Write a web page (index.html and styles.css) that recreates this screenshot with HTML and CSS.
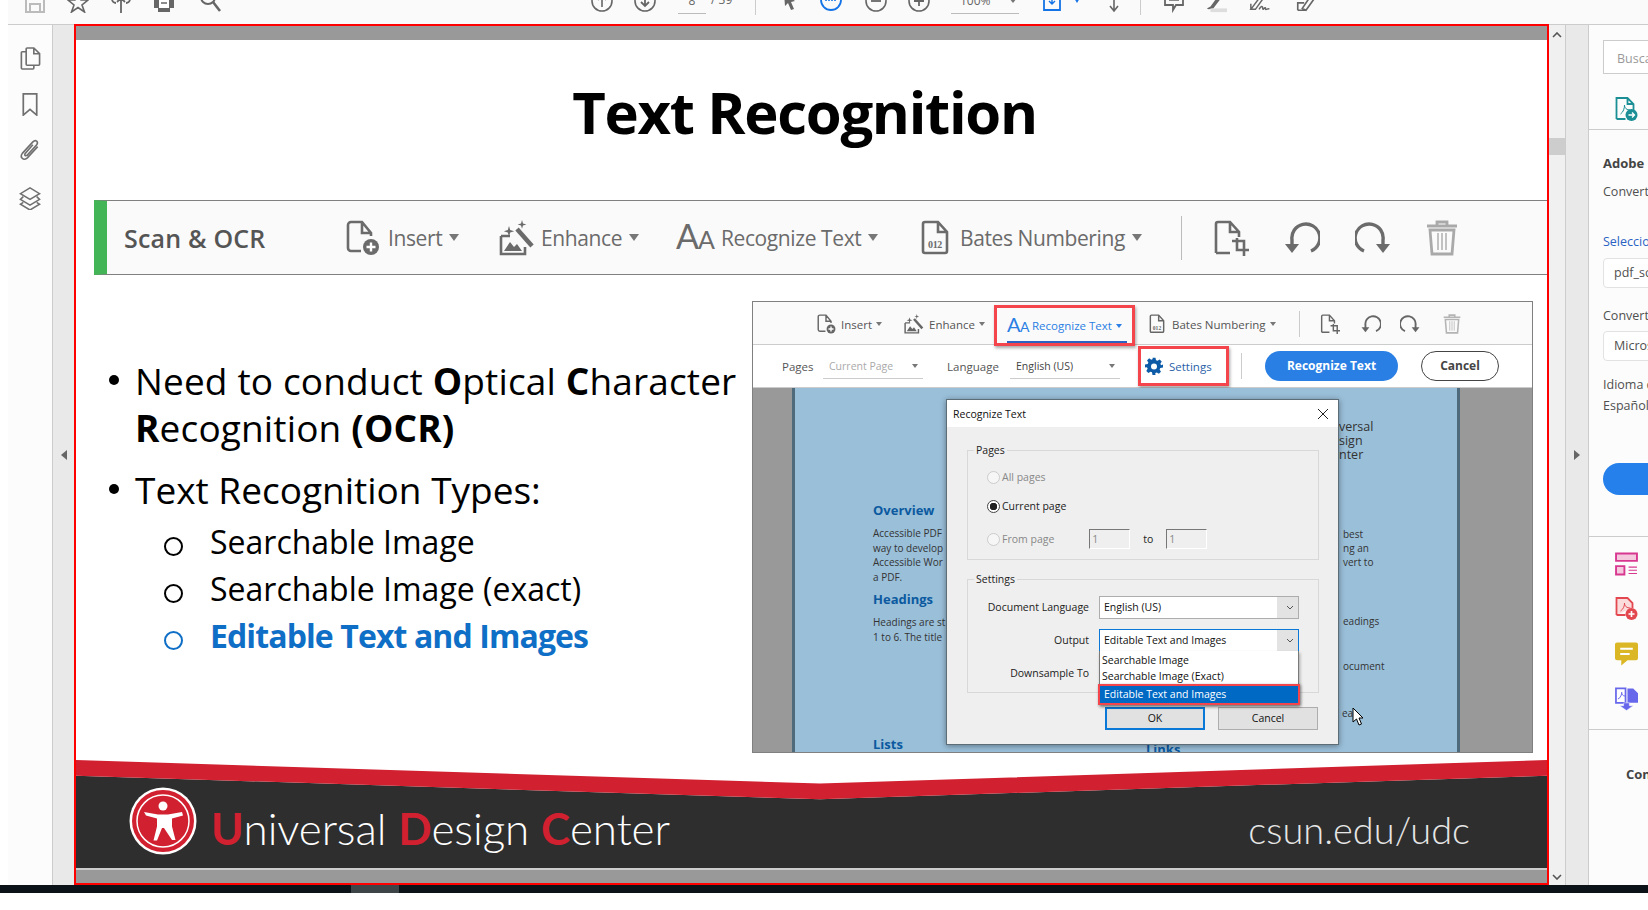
FILE: index.html

```html
<!DOCTYPE html>
<html lang="en">
<head>
    <meta charset="UTF-8">
    <title>Text Recognition - Adobe Acrobat</title>
    <link rel="stylesheet" href="styles.css">
</head>
<body>
    <!-- shared toolbar icons -->
    <svg class="defs" width="0" height="0">
        <symbol id="i-insert" viewBox="0 0 36 36">
            <path d="M4 28V5a3 3 0 0 1 3-3h11l9 11v3M18 2v11h9M4 28a3 3 0 0 0 3 3h10" fill="none" stroke="currentColor" stroke-width="2.6"/>
            <circle cx="27" cy="27" r="8" fill="currentColor"/>
            <path d="M27 22.5v9M22.5 27h9" stroke="#fff" stroke-width="2.4"/>
        </symbol>
        <symbol id="i-enhance" viewBox="0 0 36 36">
            <path d="M2 16v18h24v-7M2 16h9" fill="none" stroke="currentColor" stroke-width="2.6"/>
            <path d="M5 31l6-9 4 5 3-3 5 7z" fill="currentColor"/>
            <path d="M18 9l15 17" stroke="currentColor" stroke-width="4.5"/>
            <path d="M10 6l1.2 4 4 1.2-4 1.2-1.2 4-1.2-4-4-1.2 4-1.2zM23 0l1 3.4 3.4 1-3.4 1-1 3.4-1-3.4-3.4-1 3.4-1z" fill="currentColor"/>
        </symbol>
        <symbol id="i-bates" viewBox="0 0 28 36">
            <path d="M2 31V4a2 2 0 0 1 2-2h13l9 10v19a2 2 0 0 1-2 2H4a2 2 0 0 1-2-2zM17 2v10h9" fill="none" stroke="currentColor" stroke-width="2.6"/>
            <text x="14" y="28" text-anchor="middle" class="bates-num">012</text>
        </symbol>
        <symbol id="i-crop" viewBox="0 0 36 36">
            <path d="M3 33V4a2 2 0 0 1 2-2h12l9 10v5M17 2v10h9M3 33h14" fill="none" stroke="currentColor" stroke-width="2.6"/>
            <path d="M19 21h12v12M24 21v-3M24 21v9h12M31 33v3" fill="none" stroke="currentColor" stroke-width="2.6"/>
        </symbol>
        <symbol id="i-undo" viewBox="0 0 36 36">
            <path d="M27 31A14 14 0 1 0 8 20v5" fill="none" stroke="currentColor" stroke-width="3.4"/>
            <path d="M1 24h14l-7 9z" fill="currentColor"/>
        </symbol>
        <symbol id="i-redo" viewBox="0 0 36 36">
            <path d="M9 31A14 14 0 1 1 28 20v5" fill="none" stroke="currentColor" stroke-width="3.4"/>
            <path d="M35 24H21l7 9z" fill="currentColor"/>
        </symbol>
        <symbol id="i-trash" viewBox="0 0 36 36">
            <path d="M3 6h30M13 6V2h10v4M6 10l2 24h20l2-24z" fill="none" stroke="currentColor" stroke-width="2.8"/>
            <path d="M14 13v17M18 13v17M22 13v17" stroke="currentColor" stroke-width="1.4"/>
        </symbol>
    </svg>

    <div class="app">
        <header class="topbar">
            <svg class="tb" viewBox="0 0 22 22"><path d="M2 1h18v20H2zM6 13h10v8H6z" fill="none" stroke="#bbb" stroke-width="2"/></svg>
            <svg class="tb" viewBox="0 0 22 22"><path d="M11 1l3 8h7l-6 5 2.500 7-6.500-4.500L4.500 21 7 14 1 9h7z" fill="none" stroke="#666" stroke-width="1.600"/></svg>
            <svg class="tb" viewBox="0 0 22 22"><path d="M6 12a4 4 0 0 1 0-8 6 6 0 0 1 10 0 4 4 0 0 1 0 8M11 22V7M7 11l4-4 4 4" fill="none" stroke="#666" stroke-width="1.800"/></svg>
            <svg class="tb" viewBox="0 0 22 22"><path d="M1 2h20v15h-4v4H5v-4H1z" fill="#666"/><path d="M6 9h10v8H6z" fill="#fff"/><path d="M8 12h6" stroke="#666" stroke-width="1.500"/></svg>
            <svg class="tb" viewBox="0 0 22 22"><circle cx="9" cy="6" r="7" fill="none" stroke="#666" stroke-width="2"/><path d="M14 11l7 9" stroke="#666" stroke-width="2.600"/></svg>
            <svg class="tb" viewBox="0 0 22 22"><circle cx="11" cy="10" r="10" fill="none" stroke="#666" stroke-width="1.600"/><path d="M11 16V5M7 9l4-4 4 4" fill="none" stroke="#666" stroke-width="1.600"/></svg>
            <svg class="tb" viewBox="0 0 22 22"><circle cx="11" cy="10" r="10" fill="none" stroke="#666" stroke-width="1.600"/><path d="M11 4v11M7 11l4 4 4-4" fill="none" stroke="#666" stroke-width="1.800"/></svg>
            <span class="tb-field tb-page">8</span>
            <span class="tb-count">/ 39</span>
            <span class="tb-sep"></span>
            <svg class="tb tb-small" viewBox="0 0 14 22"><path d="M2 2l11 8-4 1 3 7-3 1-3-7-3 3z" fill="#666"/></svg>
            <svg class="tb" viewBox="0 0 22 22"><circle cx="11" cy="9" r="10" fill="none" stroke="#1473e6" stroke-width="1.800"/><path d="M6 10V4M9 10V3M12 10V3M15 10V4" stroke="#1473e6" stroke-width="1.600"/></svg>
            <svg class="tb" viewBox="0 0 22 22"><circle cx="11" cy="10" r="10" fill="none" stroke="#666" stroke-width="1.600"/><path d="M6 10h10" stroke="#666" stroke-width="1.800"/></svg>
            <svg class="tb" viewBox="0 0 22 22"><circle cx="11" cy="10" r="10" fill="none" stroke="#666" stroke-width="1.600"/><path d="M6 10h10M11 5v10" stroke="#666" stroke-width="1.800"/></svg>
            <span class="tb-field tb-zoom">100%<i class="caret"></i></span>
            <span class="tb-fit"><svg class="tb tb-fitbox" viewBox="0 0 18 22"><path d="M1 3h16v16H1z" fill="none" stroke="#1473e6" stroke-width="1.800"/><path d="M9 3v10M6 10l3 3 3-3" fill="none" stroke="#1473e6" stroke-width="1.400"/></svg><i class="caret caret-blue"></i></span>
            <svg class="tb tb-small" viewBox="0 0 14 22"><path d="M7 6v14M3 15l4 5 4-5" fill="none" stroke="#666" stroke-width="1.600"/></svg>
            <span class="tb-sep"></span>
            <svg class="tb" viewBox="0 0 22 22"><path d="M2 1h18v13h-7l-3 5v-5H2z" fill="none" stroke="#666" stroke-width="1.800"/><path d="M6 5h10M6 9h10" stroke="#666" stroke-width="1.400"/></svg>
            <svg class="tb" viewBox="0 0 24 22"><path d="M2 18l4-2L16 2l3 3-10 13-5 1z" fill="#666"/><path d="M6 18h18v4H6z" fill="#ddd"/></svg>
            <svg class="tb" viewBox="0 0 24 22"><path d="M2 19L14 3l3 2L7 19H2zM2 13v6M11 19c2-4 4-4 4-1s3-3 3 0 3-1 4 1" fill="none" stroke="#666" stroke-width="1.600"/></svg>
            <svg class="tb" viewBox="0 0 24 22"><path d="M3 20h9M3 20v-8h7M8 18L18 3l4 3-10 14z" fill="none" stroke="#666" stroke-width="1.800"/></svg>
        </header>

        <div class="workspace">
            <nav class="rail">
                <svg class="rail-icon" viewBox="0 0 22 24"><path d="M7 5H3a1 1 0 0 0-1 1v16a1 1 0 0 0 1 1h11a1 1 0 0 0 1-1v-3M7 2a1 1 0 0 1 1-1h7l6 6v11a1 1 0 0 1-1 1H8a1 1 0 0 1-1-1zM15 1v6h6" fill="none" stroke="#707070" stroke-width="1.700"/></svg>
                <svg class="rail-icon" viewBox="0 0 22 24"><path d="M4 1h14v22l-7-6-7 6z" fill="none" stroke="#707070" stroke-width="1.800"/></svg>
                <svg class="rail-icon" viewBox="0 0 22 24"><path d="M19 8L8 20c-4 3-8-1-5-5L14 3c3-3 6 0 4 3L8 17c-2 1-3 0-2-2l8-9" fill="none" stroke="#707070" stroke-width="1.700"/></svg>
                <svg class="rail-icon rail-icon-last" viewBox="0 0 22 24"><path d="M11 1l10 6-10 6L1 7zM4 10l-3 3 10 6 10-6-3-3M4 16l-3 2 10 6 10-6-3-2" fill="none" stroke="#707070" stroke-width="1.600"/></svg>
            </nav>
            <div class="gutter"><i class="arrow-left"></i></div>

            <main class="viewer">
                <div class="page-gap"></div>
                <section class="slide">
                    <h1 class="slide-title">Text Recognition</h1>

                    <div class="banner">
                        <strong class="banner-name">Scan &amp; OCR</strong>
                        <span class="tool"><svg class="ico ico-insert"><use href="#i-insert"/></svg>Insert<i class="caret"></i></span>
                        <span class="tool"><svg class="ico"><use href="#i-enhance"/></svg>Enhance<i class="caret"></i></span>
                        <span class="tool"><span class="aa">A<small>A</small></span>Recognize Text<i class="caret"></i></span>
                        <span class="tool"><svg class="ico ico-bates"><use href="#i-bates"/></svg>Bates Numbering<i class="caret"></i></span>
                        <span class="vsep"></span>
                        <svg class="ico"><use href="#i-crop"/></svg>
                        <svg class="ico"><use href="#i-undo"/></svg>
                        <svg class="ico"><use href="#i-redo"/></svg>
                        <svg class="ico ico-light"><use href="#i-trash"/></svg>
                    </div>

                    <div class="slide-body">
                        <div class="points">
                            <ul class="main-list">
                                <li>Need to conduct <b>O</b>ptical <b>C</b>haracter <b>R</b>ecognition <b>(OCR)</b></li>
                                <li>Text Recognition Types:</li>
                            </ul>
                            <ul class="sub-list">
                                <li>Searchable Image</li>
                                <li>Searchable Image (exact)</li>
                                <li class="sub-active">Editable Text and Images</li>
                            </ul>
                        </div>

                        <div class="shot">
                            <div class="shot-tools">
                                <span class="stool"><svg class="sico"><use href="#i-insert"/></svg>Insert<i class="scaret"></i></span>
                                <span class="stool"><svg class="sico"><use href="#i-enhance"/></svg>Enhance<i class="scaret"></i></span>
                                <span class="stool stool-on"><span class="saa">A<small>A</small></span>Recognize Text<i class="scaret"></i></span>
                                <span class="stool"><svg class="sico sico-bates"><use href="#i-bates"/></svg>Bates Numbering<i class="scaret"></i></span>
                                <span class="svsep"></span>
                                <svg class="sico"><use href="#i-crop"/></svg>
                                <svg class="sico"><use href="#i-undo"/></svg>
                                <svg class="sico"><use href="#i-redo"/></svg>
                                <svg class="sico ico-light"><use href="#i-trash"/></svg>
                            </div>
                            <div class="shot-options">
                                <span>Pages</span>
                                <span class="opt-select opt-off">Current Page<i class="scaret"></i></span>
                                <span>Language</span>
                                <span class="opt-select">English (US)<i class="scaret"></i></span>
                                <span class="opt-settings">
                                    <svg class="gear" viewBox="0 0 24 24"><path d="M10 1h4l.7 3.200 2 .9 2.800-1.800 2.800 2.800-1.800 2.800.9 2L24 10v4l-3.600.7-.9 2 1.800 2.800-2.800 2.800-2.800-1.800-2 .9L14 24h-4l-.7-3.600-2-.9-2.800 1.800-2.800-2.800 1.800-2.800-.9-2L0 14v-4l3.600-.7.9-2-1.800-2.800 2.800-2.800 2.800 1.800 2-.9z" fill="#0d5aa7"/><circle cx="12" cy="12.500" r="4" fill="#fff"/></svg>
                                    Settings
                                </span>
                                <span class="svsep"></span>
                                <span class="btn-blue">Recognize Text</span>
                                <span class="btn-cancel">Cancel</span>
                            </div>

                            <div class="shot-view">
                                <div class="doc">
                                    <div class="doc-left">
                                        <h3>Overview</h3>
                                        <p>Accessible PDF<br>way to develop<br>Accessible Wor<br>a PDF.</p>
                                        <h3>Headings</h3>
                                        <p>Headings are st<br>1 to 6. The title</p>
                                        <h3 class="doc-lists">Lists</h3>
                                    </div>
                                    <div class="doc-right">
                                        <p class="doc-logo">versal<br>sign<br>nter</p>
                                        <p class="doc-frag1">best<br>ng an<br>vert to</p>
                                        <p class="doc-frag2">eadings</p>
                                        <p class="doc-frag3">ocument</p>
                                        <p class="doc-frag4">eat</p>
                                    </div>
                                </div>
                                <h3 class="doc-links">Links</h3>

                                <div class="dialog">
                                    <div class="dialog-title">Recognize Text<svg class="close" viewBox="0 0 10 10"><path d="M0 0l10 10M10 0L0 10" stroke="#222" stroke-width="1"/></svg></div>
                                    <fieldset class="group group-pages">
                                        <legend>Pages</legend>
                                        <div class="radio radio-off"><i></i>All pages</div>
                                        <div class="radio radio-on"><i></i>Current page</div>
                                        <div class="radio radio-off radio-range"><i></i>From page<span class="num">1</span><span class="to">to</span><span class="num">1</span></div>
                                    </fieldset>
                                    <fieldset class="group group-settings">
                                        <legend>Settings</legend>
                                        <div class="form-row">
                                            <label>Document Language</label>
                                            <span class="combo">English (US)<svg class="chev" viewBox="0 0 8 5"><path d="M1 1l3 3 3-3" fill="none" stroke="#555"/></svg></span>
                                        </div>
                                        <div class="form-row">
                                            <label>Output</label>
                                            <span class="combo combo-open">Editable Text and Images<svg class="chev" viewBox="0 0 8 5"><path d="M1 1l3 3 3-3" fill="none" stroke="#555"/></svg>
                                                <span class="droplist">
                                                    <span>Searchable Image</span>
                                                    <span>Searchable Image (Exact)</span>
                                                    <span class="drop-on">Editable Text and Images</span>
                                                </span>
                                            </span>
                                        </div>
                                        <div class="form-row">
                                            <label>Downsample To</label>
                                        </div>
                                    </fieldset>
                                    <div class="dialog-actions">
                                        <span class="dbtn dbtn-ok">OK</span>
                                        <span class="dbtn">Cancel</span>
                                    </div>
                                </div>
                                <svg class="cursor" viewBox="0 0 12 19"><path d="M1 1v14l3.500-3 2.500 6 2.500-1-2.500-6H11z" fill="#fff" stroke="#000"/></svg>
                            </div>
                        </div>
                    </div>

                    <footer class="slide-foot">
                        <svg class="foot-bg" viewBox="0 0 1471 110" preserveAspectRatio="none">
                            <path d="M0 16L744 40 1471 16V110H0z" fill="#2e2e2e"/>
                            <path d="M0 0L744 24 1471 0V16L744 40 0 16z" fill="#d12030"/>
                        </svg>
                        <svg class="foot-logo" viewBox="0 0 68 68">
                            <circle cx="34" cy="34" r="33.500" fill="#fff"/>
                            <circle cx="34" cy="34" r="31" fill="#d12030"/>
                            <circle cx="34" cy="34" r="26" fill="none" stroke="#fff" stroke-width="1.500"/>
                            <circle cx="34" cy="19" r="4.500" fill="#fff"/>
                            <path d="M15 25l14 2.500h10L53 25l1 3.500-11 3v8l3.500 13.500h-3.500L35 41h-2l-5 12.500h-3.500L28 39.500v-8l-11-3z" fill="#fff"/>
                        </svg>
                        <div class="foot-name"><em>U</em>niversal <em>D</em>esign <em>C</em>enter</div>
                        <div class="foot-url">csun.edu/udc</div>
                    </footer>
                </section>
                <div class="page-gap page-gap-end"></div>
            </main>

            <div class="strip">
                <svg class="chevron" viewBox="0 0 10 6"><path d="M1 5l4-4 4 4" fill="none" stroke="#555" stroke-width="1.600"/></svg>
                <div class="thumb"></div>
                <svg class="chevron chevron-end" viewBox="0 0 10 6"><path d="M1 1l4 4 4-4" fill="none" stroke="#555" stroke-width="1.600"/></svg>
            </div>
            <div class="gutter gutter-right"><i class="arrow-right"></i></div>

            <aside class="side">
                <div class="search">Buscar</div>
                <div class="side-tool">
                    <svg class="side-icon" viewBox="0 0 22 24"><path d="M1 22V1h11l6 6v6M12 1v6h6M1 22h9" fill="none" stroke="#1b8f95" stroke-width="1.800"/><path d="M5 17c3-2 4-6 4-9 0 3 2 5 6 5" fill="none" stroke="#1b8f95"/><circle cx="16" cy="18" r="6" fill="#1b8f95"/><path d="M13 18h6M16.500 15.500L19 18l-2.500 2.500" fill="none" stroke="#fff" stroke-width="1.300"/></svg>
                </div>
                <div class="side-form">
                    <div class="side-head">Adobe Export PDF</div>
                    <div class="side-line">Convertir archivos PDF</div>
                    <div class="side-link">Seleccionar archivo PDF</div>
                    <div class="side-box">pdf_scan.pdf</div>
                    <div class="side-line side-label">Convertir a</div>
                    <div class="side-box side-box-alt">Microsoft Word</div>
                    <div class="side-line side-lang">Idioma de documento</div>
                    <div class="side-line side-lang2">Español</div>
                    <div class="side-btn"></div>
                </div>
                <div class="side-icons">
                    <svg class="side-icon" viewBox="0 0 22 22"><path d="M1 1h20v7H1zM1 13h8v8H1z" fill="#f4c9de" stroke="#d83790" stroke-width="1.800"/><path d="M13 14h8M13 17h8M13 20h8" stroke="#d83790"/></svg>
                    <svg class="side-icon" viewBox="0 0 22 24"><path d="M1 18V1h11l5 5v5M1 18h9" fill="#fbdcdc" stroke="#e34850" stroke-width="1.800"/><path d="M5 14c3-2 4-5 4-8 0 3 2 5 6 5" fill="none" stroke="#e34850"/><circle cx="16" cy="17" r="6" fill="#e34850"/><path d="M13 17h6M16 14v6" stroke="#fff" stroke-width="1.600"/></svg>
                    <svg class="side-icon" viewBox="0 0 22 22"><path d="M2 0h18a2 2 0 0 1 2 2v13a2 2 0 0 1-2 2h-8l-6 5v-5H2a2 2 0 0 1-2-2V2a2 2 0 0 1 2-2z" fill="#dbb726"/><path d="M5 6h12M5 11h9" stroke="#fff" stroke-width="1.800"/></svg>
                    <svg class="side-icon" viewBox="0 0 24 24"><path d="M1 1h10v15H1z" fill="#fff" stroke="#6767ec" stroke-width="1.800"/><path d="M13 1h6l5 5v10H13z" fill="#6767ec"/><path d="M3 12c3-1 4-5 4-7 0 2 1 4 4 4" fill="none" stroke="#6767ec"/><path d="M9 16h6v3h4l-7 5-7-5h4z" fill="#6767ec" stroke="#fff" stroke-width=".5"/></svg>
                </div>
                <div class="side-more">Convertir</div>
            </aside>
        </div>
    </div>

    <div class="taskbar"><span class="task-on"></span></div>
</body>
</html>
```

FILE: styles.css

```css
* {
    box-sizing: border-box;
}
html, body {
    margin: 0;
    height: 910px;
    overflow: hidden;
    background: #fff;
}
body {
    font-family: "Open Sans", sans-serif;
    color: #333;
}
.defs {
    position: absolute;
}
.bates-num {
    font-family: "Liberation Serif", serif;
    font-size: 10px;
    font-weight: bold;
    fill: currentColor;
}
.app {
    margin-left: 8px;
    height: 885px;
    display: flex;
    flex-direction: column;
}
.taskbar {
    height: 8px;
    background: #0b1318;
    padding-left: 351px;
}
.task-on {
    display: block;
    width: 48px;
    height: 8px;
    background: #3d4549;
}

/* top toolbar, cut off by the screenshot */
.topbar {
    height: 24px;
    flex: none;
    overflow: hidden;
    background: #fafafa;
    padding-left: 16px;
    padding-bottom: 11px;
    display: grid;
    grid-template-columns: 43px 43px 43px 46px 392px 43px 44px 33px 44px 27px 38px 45px 43px 43px 92px 64px 33px 23px 42px 44px 46px 30px;
    align-items: end;
    align-content: end;
}
.tb {
    width: 22px;
    height: 22px;
    display: block;
}
.tb-small {
    width: 14px;
}
.tb-fitbox {
    width: 18px;
}
.tb-field {
    font-size: 12px;
    line-height: 14px;
    color: #666;
    border-bottom: 1px solid #bbb;
    padding-bottom: 5px;
    margin-bottom: -1px;
    display: block;
}
.tb-page {
    width: 28px;
    text-align: center;
}
.tb-count {
    font-size: 12px;
    line-height: 14px;
    color: #666;
    padding-bottom: 6px;
}
.tb-zoom {
    width: 68px;
    padding-left: 9px;
}
.tb-fit {
    display: flex;
    align-items: flex-end;
    gap: 6px;
}
.tb-sep {
    width: 1px;
    height: 24px;
    margin-bottom: -2px;
    background: #ccc;
}
.caret {
    display: inline-block;
    width: 0;
    height: 0;
    border: 5.500px solid transparent;
    border-top: 7px solid #777;
    border-bottom: 0;
    margin-left: 7px;
    vertical-align: middle;
}
.tb-zoom .caret {
    border-width: 5px 4px 0;
    margin-left: 18px;
    margin-bottom: 3px;
}
.caret-blue {
    border-width: 5px 3px 0;
    border-top-color: #1473e6;
    margin-bottom: 10px;
}

.workspace {
    flex: 1;
    min-height: 0;
    display: flex;
}
.rail {
    width: 45px;
    flex: none;
    background: #fcfcfc;
    border-top: 1px solid #ccc;
    border-right: 1px solid #ccc;
    padding-top: 22px;
    display: flex;
    flex-direction: column;
    align-items: center;
    gap: 23px;
}
.rail-icon {
    width: 22px;
    height: 23px;
}
.rail-icon-last {
    margin-top: 2px;
}
.gutter {
    width: 21px;
    flex: none;
    background: #e9e9e9;
    border-top: 1px solid #ccc;
    display: flex;
    align-items: center;
    justify-content: center;
}
.gutter-right {
    width: 22px;
}
.arrow-left {
    border: 5px solid transparent;
    border-right: 6px solid #666;
    border-left: 0;
}
.arrow-right {
    border: 5px solid transparent;
    border-left: 6px solid #666;
    border-right: 0;
}

/* document viewer */
.viewer {
    width: 1475px;
    flex: none;
    border: 2px solid #f00;
    display: flex;
    flex-direction: column;
    background: #999;
}
.page-gap {
    height: 14px;
    flex: none;
    background: #999;
}
.page-gap-end {
    border-top: 1px solid #ccc;
}
.slide {
    flex: 1;
    min-height: 0;
    background: #fff;
    display: flex;
    flex-direction: column;
}
.slide-title {
    margin: 0;
    height: 160px;
    padding: 38px 14px 0 0;
    text-align: center;
    font-family: "Open Sans", sans-serif;
    font-size: 58px;
    line-height: 68px;
    font-weight: 700;
    letter-spacing: -1.300px;
    color: #000;
}

.banner {
    margin-left: 18px;
    height: 75px;
    flex: none;
    background: #fafafa;
    border-top: 1px solid #808080;
    border-bottom: 1px solid #808080;
    border-left: 13px solid #44b556;
    padding-left: 17px;
    display: grid;
    grid-template-columns: 220px 155px 177px 245px 260px 32px 71px 71px 69px 36px;
    align-items: center;
    color: #6b6b6b;
}
.banner-name {
    font-size: 25px;
    font-weight: 600;
    letter-spacing: .2px;
    font-family: "Open Sans", sans-serif;
    color: #555;
}
.tool {
    font-size: 21px;
    font-family: "Open Sans", sans-serif;
    letter-spacing: -.4px;
    display: flex;
    align-items: center;
    white-space: nowrap;
}
.ico {
    width: 36px;
    height: 36px;
    margin-right: 6px;
    color: #6b6b6b;
    flex: none;
}
.ico-insert {
    margin-right: 8px;
}
.ico-bates {
    width: 28px;
    margin-right: 11px;
}
.ico-light {
    color: #a9a9a9;
}
.aa {
    font-family: "Lato", sans-serif;
    font-size: 34px;
    font-weight: 400;
    line-height: 38px;
    width: 45px;
    letter-spacing: -1px;
}
.aa small {
    font-size: 25px;
}
.vsep {
    width: 1px;
    height: 44px;
    background: #bbb;
}

.slide-body {
    flex: none;
    height: 478px;
    display: flex;
}
.points {
    width: 672px;
    flex: none;
    padding: 82px 0 0 37px;
    font-family: "Open Sans", sans-serif;
    color: #000;
}
.main-list, .sub-list {
    margin: 0;
    padding: 0;
    list-style: none;
}
.main-list li {
    font-size: 37px;
    line-height: 47px;
    padding-left: 22px;
    margin-bottom: 15px;
    position: relative;
}
.main-list li:first-child {
    letter-spacing: .15px;
}
.main-list li::before {
    content: "";
    position: absolute;
    left: -4px;
    top: 18px;
    width: 10px;
    height: 10px;
    border-radius: 50%;
    background: #000;
}
.sub-list {
    margin-top: -10px;
    padding-left: 51px;
}
.sub-list li {
    font-size: 32px;
    line-height: 47px;
    padding-left: 46px;
    position: relative;
}
.sub-list li::before {
    content: "";
    position: absolute;
    left: 0;
    top: 19px;
    width: 15px;
    height: 15px;
    border: 2px solid #000;
    border-radius: 50%;
}
.sub-list .sub-active {
    color: #0f6fc6;
    font-weight: 700;
    letter-spacing: -.9px;
}
.sub-list .sub-active::before {
    border-color: #0f6fc6;
}

/* screenshot inside the slide */
.shot {
    margin: 26px 0 0 4px;
    width: 781px;
    height: 452px;
    border: 1px solid #808080;
    display: flex;
    flex-direction: column;
    color: #555;
    font-family: "Open Sans", sans-serif;
}
.shot-tools {
    height: 43px;
    flex: none;
    background: #fafafa;
    border-bottom: 1px solid #ccc;
    padding-left: 63px;
    padding-bottom: 3px;
    display: grid;
    grid-template-columns: 88px 90px 155px 150px 21px 41px 39px 42px 20px;
    align-items: center;
    font-size: 11.500px;
}
.stool {
    display: flex;
    align-items: center;
    white-space: nowrap;
}
.sico {
    width: 20px;
    height: 20px;
    margin-right: 5px;
    color: #666;
    flex: none;
}
.sico-bates {
    width: 16px;
    margin-right: 7px;
}
.sico.ico-light {
    color: #b4b4b4;
}
.stool-on {
    position: relative;
    height: 41px;
    margin-top: 3px;
    width: 141px;
    padding-left: 10px;
    border: 3px solid #f4454c;
    box-shadow: 1px 2px 3px rgba(0,0,0,.35);
    color: #2a7fe4;
    z-index: 1;
}
.stool-on::after {
    content: "";
    position: absolute;
    left: 10px;
    right: 5px;
    bottom: 0;
    height: 2px;
    background: #2a62c4;
}
.saa {
    font-family: "Lato", sans-serif;
    font-size: 20px;
    line-height: 20px;
    width: 25px;
    letter-spacing: -.5px;
}
.saa small {
    font-size: 14px;
}
.scaret {
    display: inline-block;
    border: 3px solid transparent;
    border-top: 4px solid #777;
    border-bottom: 0;
    margin-left: 4px;
}
.stool-on .scaret {
    border-top-color: #2a7fe4;
}
.svsep {
    width: 1px;
    height: 26px;
    background: #ccc;
}
.shot-options {
    height: 43px;
    flex: none;
    background: #fff;
    border-bottom: 1px solid #ccc;
    padding-left: 29px;
    display: grid;
    grid-template-columns: 41px 124px 63px 128px 103px 24px 156px 78px;
    align-items: center;
    font-size: 11.500px;
}
.opt-select {
    width: 100px;
    height: 25px;
    border-bottom: 1px solid #ccc;
    padding: 0 5px 0 6px;
    font-size: 10.500px;
    color: #444;
    display: flex;
    justify-content: space-between;
    align-items: center;
}
.opt-select + span + .opt-select {
    width: 110px;
}
.opt-off {
    color: #aaa;
}
.opt-settings {
    width: 91px;
    height: 40px;
    display: flex;
    align-items: center;
    gap: 6px;
    padding-left: 4px;
    border: 3px solid #f4454c;
    box-shadow: 1px 2px 3px rgba(0,0,0,.35);
    color: #2a5fa8;
}
.gear {
    width: 18px;
    height: 18px;
}
.btn-blue {
    width: 133px;
    height: 30px;
    line-height: 29px;
    border-radius: 15px;
    background: #2a7fe4;
    color: #fff;
    font-weight: 700;
    font-size: 12px;
    text-align: center;
}
.btn-cancel {
    width: 78px;
    height: 30px;
    line-height: 28px;
    border: 1px solid #444;
    border-radius: 15px;
    background: #fff;
    color: #444;
    font-weight: 700;
    font-size: 12px;
    text-align: center;
}

.shot-view {
    flex: 1;
    min-height: 0;
    position: relative;
    background: #999;
    padding-left: 39px;
    overflow: hidden;
}
.doc {
    width: 668px;
    height: 100%;
    background: #9abfd9;
    border-left: 3px solid #4f6a7a;
    border-right: 3px solid #4f6a7a;
    padding-left: 78px;
    display: flex;
    color: #333;
    font-size: 10px;
    line-height: 14.500px;
}
.doc h3 {
    margin: 0;
    color: #0b5aa0;
    font-size: 13px;
    line-height: 18px;
    font-weight: 700;
}
.doc p {
    margin: 0;
}
.doc-left {
    width: 468px;
    flex: none;
    padding-top: 113px;
}
.doc-left p {
    margin: 7px 0 6px;
}
.doc-lists {
    margin-top: 91px !important;
}
.doc-links {
    position: absolute;
    margin: 0;
    left: 393px;
    top: 352px;
    color: #0b5aa0;
    font-size: 13px;
    line-height: 18px;
}
.doc-right {
    position: relative;
    flex: 1;
}
.doc-right p {
    white-space: nowrap;
}
.doc-logo {
    margin-left: -2px !important;
    padding-top: 32px;
    font-size: 12.500px;
    line-height: 14px;
}
.doc-frag1 {
    margin-top: 65px !important;
    padding-left: 2px;
    line-height: 14px;
}
.doc-frag2 {
    margin-top: 45px !important;
    padding-left: 2px;
}
.doc-frag3 {
    margin-top: 30px !important;
    padding-left: 2px;
}
.doc-frag4 {
    margin-top: 33px !important;
    padding-left: 1px;
}

/* dialog sits over the scanned page */
.dialog {
    position: absolute;
    left: 193px;
    top: 11px;
    width: 393px;
    height: 346px;
    background: #efefef;
    border: 1px solid #5c6d78;
    box-shadow: 0 1px 6px rgba(0,0,0,.4);
    color: #222;
    font-size: 10.500px;
}
.dialog-title {
    height: 27px;
    background: #fff;
    padding: 0 8px 0 6px;
    display: flex;
    justify-content: space-between;
    align-items: center;
    color: #111;
}
.close {
    width: 10px;
    height: 10px;
    margin-right: 2px;
}
.group {
    margin: 0 19px 0 20px;
    padding: 0;
    border: 1px solid #d8d8d8;
    min-width: 0;
}
.group legend {
    margin-left: 6px;
    padding: 0 2px;
    line-height: 14px;
}
.group-pages {
    margin-top: 16px;
    height: 117px;
    padding: 12px 0 0 19px;
}
.group-pages legend {
    margin-left: -13px;
}
.radio {
    height: 16px;
    margin-bottom: 13px;
    display: flex;
    align-items: center;
}
.radio i {
    width: 13px;
    height: 13px;
    border-radius: 50%;
    border: 1px solid #444;
    background: #fff;
    margin-right: 2px;
}
.radio-off {
    color: #888;
}
.radio-off i {
    border-color: #ccc;
    background: #f6f6f6;
}
.radio-on i {
    background: radial-gradient(circle, #222 0 3.500px, #fff 4px);
}
.radio-range {
    margin-top: 17px;
    margin-bottom: 0;
}
.num {
    width: 41px;
    height: 20px;
    line-height: 19px;
    padding-left: 2px;
    border-top: 1px solid #777;
    border-left: 1px solid #777;
    border-right: 1px solid #fff;
    border-bottom: 1px solid #fff;
    margin-left: 35px;
}
.to {
    color: #222;
    margin-left: 13px;
    width: 10px;
}
.to + .num {
    margin-left: 13px;
}
.group-settings {
    margin-top: 12px;
    height: 121px;
    padding-top: 10px;
}
.form-row {
    height: 33px;
    display: flex;
    align-items: flex-start;
}
.form-row label {
    width: 121px;
    flex: none;
    text-align: right;
    line-height: 23px;
    margin-right: 10px;
}
.combo {
    position: relative;
    width: 200px;
    height: 23px;
    border: 1px solid #adadad;
    background: linear-gradient(90deg, #fff 0 177px, #e3e3e3 177px);
    padding-left: 4px;
    line-height: 21px;
    color: #111;
}
.combo-open {
    border-color: #0a78d6;
}
.chev {
    position: absolute;
    right: 4px;
    top: 8px;
    width: 8px;
    height: 5px;
}
.droplist {
    position: absolute;
    left: -1px;
    top: 21px;
    width: 200px;
    background: #fff;
    border: 1px solid #7a7a7a;
    border-top: 0;
    display: flex;
    flex-direction: column;
    box-shadow: 1px 2px 3px rgba(0,0,0,.3);
    z-index: 2;
    padding-top: 1px;
}
.droplist span {
    height: 16px;
    line-height: 16px;
    padding-left: 2px;
    color: #111;
}
.droplist .drop-on {
    background: #0069c4;
    color: #fff;
    height: 21px;
    line-height: 17px;
    margin: 0 -2px -1px;
    padding-left: 4px;
    border: 2px solid #f4454c;
    box-shadow: 1px 1px 3px rgba(0,0,0,.4);
}
.dialog-actions {
    margin: 14px 20px 0 158px;
    display: flex;
    justify-content: space-between;
}
.dbtn {
    width: 100px;
    height: 23px;
    line-height: 21px;
    text-align: center;
    background: #e1e1e1;
    border: 1px solid #adadad;
    color: #111;
}
.dbtn-ok {
    border: 2px solid #0a78d6;
    line-height: 19px;
}
.cursor {
    position: absolute;
    left: 599px;
    top: 319px;
    width: 12px;
    height: 19px;
}

/* slide footer */
.slide-foot {
    position: relative;
    flex: 1;
    min-height: 0;
    margin-top: 7px;
    border-bottom: 1px solid #ccc;
    display: flex;
    align-items: flex-start;
    padding: 27px 77px 0 53px;
}
.foot-bg {
    position: absolute;
    left: 0;
    top: 0;
    width: 100%;
    height: 100%;
}
.foot-logo {
    position: relative;
    width: 68px;
    height: 68px;
    flex: none;
}
.foot-name {
    position: relative;
    margin: 13px 0 0 14px;
    font-family: "Lato", sans-serif;
    font-size: 44px;
    line-height: 56px;
    font-weight: 300;
    letter-spacing: -.1px;
    color: #fff;
    white-space: nowrap;
}
.foot-name em {
    font-style: normal;
    font-weight: 700;
    color: #d12030;
}
.foot-url {
    position: relative;
    margin: 14px 0 0 auto;
    font-family: "Lato", sans-serif;
    font-size: 38px;
    line-height: 56px;
    font-weight: 300;
    color: #e6e6e6;
}

/* scroll strip */
.strip {
    width: 17px;
    flex: none;
    background: #f0f0f0;
    border-top: 1px solid #ccc;
    border-right: 1px solid #ccc;
    display: flex;
    flex-direction: column;
    align-items: center;
    padding: 7px 0 5px;
}
.chevron {
    width: 10px;
    height: 6px;
    flex: none;
}
.thumb {
    width: 16px;
    height: 17px;
    margin-top: 100px;
    background: #cdcdcd;
}
.chevron-end {
    margin-top: auto;
}

/* right panel, most of it off screen */
.side {
    width: 60px;
    flex: none;
    background: #fcfcfc;
    border-top: 1px solid #ccc;
    border-left: 1px solid #ccc;
    overflow: hidden;
    white-space: nowrap;
    font-size: 12.500px;
    color: #505050;
}
.search {
    margin: 15px 0 0 14px;
    width: 70px;
    height: 34px;
    line-height: 36px;
    padding-left: 13px;
    background: #fff;
    border: 1px solid #ccc;
    color: #999;
}
.side-tool {
    height: 56px;
    border-bottom: 1px solid #ccc;
    padding: 23px 0 0 26px;
}
.side-icon {
    width: 23px;
    height: 24px;
    display: block;
}
.side-form {
    padding: 24px 0 0 14px;
    height: 407px;
    border-bottom: 1px solid #ccc;
}
.side-head {
    line-height: 18px;
    font-weight: 700;
    font-size: 13px;
    color: #444;
}
.side-line {
    line-height: 18px;
}
.side-head + .side-line {
    margin-top: 11px;
}
.side-link {
    margin-top: 32px;
    line-height: 18px;
    color: #2a62c4;
}
.side-box {
    margin-top: 7px;
    width: 80px;
    height: 30px;
    line-height: 28px;
    padding-left: 10px;
    border: 1px solid #e2e2e2;
    border-radius: 4px;
    background: #fff;
}
.side-label {
    margin-top: 19px;
}
.side-box-alt {
    margin-top: 6px;
}
.side-lang {
    margin-top: 15px;
}
.side-lang2 {
    margin-top: 3px;
}
.side-btn {
    margin-top: 48px;
    width: 90px;
    height: 32px;
    border-radius: 16px;
    background: #2680eb;
}
.side-icons {
    padding: 15px 0 0 26px;
    height: 193px;
    border-bottom: 1px solid #ccc;
    display: flex;
    flex-direction: column;
    gap: 21px;
}
.side-more {
    margin: 35px 0 0 37px;
    font-weight: 700;
    font-size: 13px;
    color: #444;
}
```
